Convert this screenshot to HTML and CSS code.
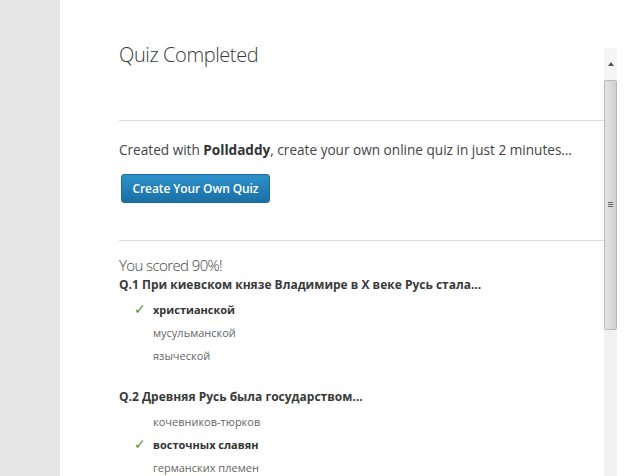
FILE: index.html
```html
<!DOCTYPE html>
<html lang="en">
<head>
<meta charset="utf-8">
<title>Quiz Completed</title>
<link rel="stylesheet" href="styles.css">
</head>
<body>
<div class="page">
  <div class="side"></div>
  <div class="content">
    <div class="quiz">
      <h1 class="title">Quiz Completed</h1>
      <hr class="rule">
      <p class="promo">Created with <b>Polldaddy</b>, create your own online quiz in just 2 minutes…</p>
      <a class="btn" href="#">Create Your Own Quiz</a>
      <hr class="rule rule2">
      <div class="score">You scored 90%!</div>
      <div class="question">
        <div class="q">Q.1 При киевском князе Владимире в X веке Русь стала...</div>
        <ul class="answers">
          <li class="ans correct"><span class="check">✓</span>христианской</li>
          <li class="ans">мусульманской</li>
          <li class="ans">языческой</li>
        </ul>
      </div>
      <div class="question">
        <div class="q">Q.2 Древняя Русь была государством...</div>
        <ul class="answers">
          <li class="ans">кочевников-тюрков</li>
          <li class="ans correct"><span class="check">✓</span>восточных славян</li>
          <li class="ans">германских племен</li>
        </ul>
      </div>
    </div>
    <div class="scrollbar">
      <div class="arrow"><span class="tri"></span></div>
      <div class="thumb"><span class="grip"></span></div>
    </div>
  </div>
</div>
</body>
</html>
```
FILE: styles.css
```css
html, body {
  margin: 0;
  padding: 0;
  background: #fff;
  overflow: hidden;
}
body {
  font-family: "Open Sans", "Liberation Sans", sans-serif;
  color: #333;
}
.page {
  display: flex;
  height: 476px;
}
.side {
  width: 60px;
  flex: none;
  background: #e6e6e6;
}
.content {
  flex: 1;
  display: flex;
  padding-left: 59px;
}
.quiz {
  width: 485px;
  flex: none;
}
.title {
  margin: 41px 0 0;
  font-size: 20px;
  font-weight: 300;
  line-height: 27px;
  color: #3a3a3a;
  letter-spacing: -0.4px;
}
.rule {
  margin: 52px 0 0;
  border: 0;
  border-top: 1px solid #dcdcdc;
  height: 0;
}
.promo {
  margin: 19px 0 0;
  font-size: 13.6px;
  line-height: 20px;
  color: #444;
}
.promo b {
  font-weight: 700;
  color: #333;
}
.btn {
  display: inline-block;
  margin: 14px 0 0 2px;
  width: 149px;
  height: 29px;
  box-sizing: border-box;
  border: 1px solid #1b6b9c;
  border-radius: 3px;
  background: linear-gradient(#2e90c9, #1a70a6);
  color: #fff;
  font-size: 12px;
  font-weight: 600;
  line-height: 27px;
  text-align: center;
  text-decoration: none;
  letter-spacing: -0.1px;
}
.rule2 {
  margin-top: 37px;
}
.score {
  margin-top: 14px;
  font-size: 15px;
  font-weight: 300;
  line-height: 20px;
  color: #444;
  letter-spacing: -0.6px;
}
.question {
  margin-bottom: 21px;
}
.q {
  margin-top: 1px;
  font-size: 12px;
  font-weight: 700;
  line-height: 18px;
  color: #3a3a3a;
}
.answers {
  list-style: none;
  margin: 4px 0 0;
  padding: 0 0 0 34px;
}
.ans {
  position: relative;
  font-size: 11px;
  line-height: 23px;
  color: #666;
}
.ans.correct {
  font-weight: 700;
  color: #333;
}
.check {
  position: absolute;
  left: -19px;
  top: 0;
  color: #4a9a3a;
  font-family: "DejaVu Sans", sans-serif;
  font-size: 14px;
  font-weight: 700;
}
.scrollbar {
  margin-top: 48px;
  width: 13px;
  flex: none;
  background: #f2f2f2;
  display: flex;
  flex-direction: column;
}
.arrow {
  height: 32px;
  display: flex;
  align-items: center;
  justify-content: center;
  background: #f5f5f5;
}
.tri {
  width: 0;
  height: 0;
  border-left: 3px solid transparent;
  border-right: 3px solid transparent;
  border-bottom: 4px solid #555;
}
.thumb {
  height: 250px;
  box-sizing: border-box;
  border: 1px solid #b8b8b8;
  border-radius: 2px;
  background: linear-gradient(90deg, #e4e4e4, #d8d8d8 60%, #cfcfcf);
  display: flex;
  align-items: center;
  justify-content: center;
}
.grip {
  width: 5px;
  height: 6px;
  background: repeating-linear-gradient(#666 0 1px, transparent 1px 2px);
}
```
